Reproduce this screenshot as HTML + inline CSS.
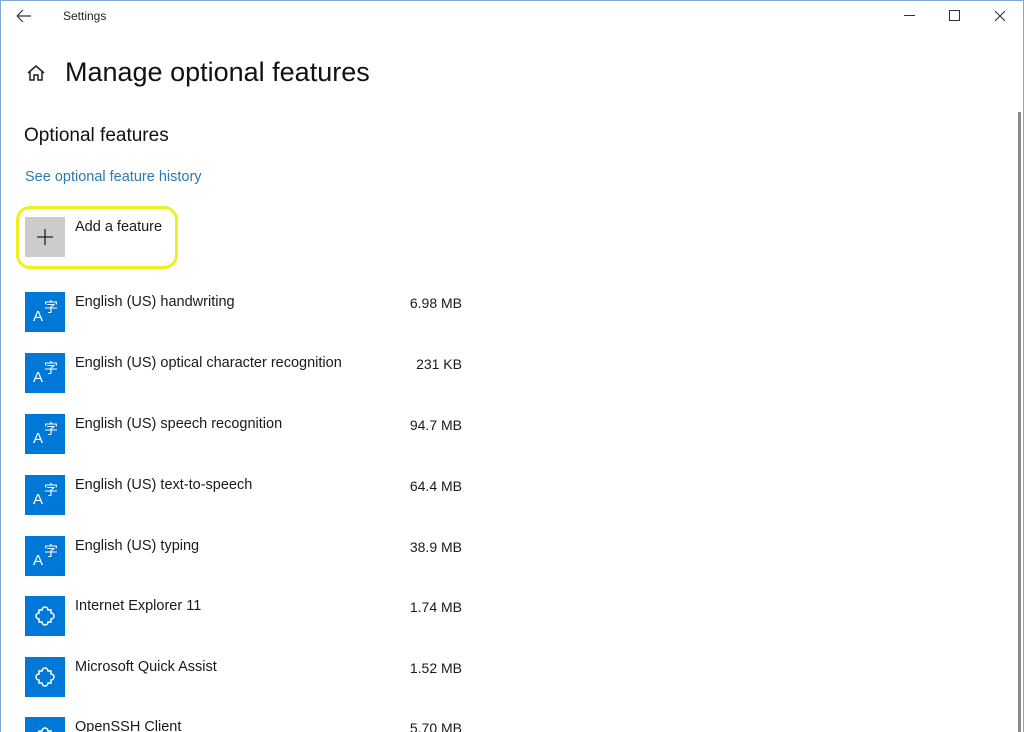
<!DOCTYPE html>
<html><head><meta charset="utf-8"><style>
html,body{margin:0;width:1024px;height:732px;overflow:hidden}
body{background:#fff;font-family:"Segoe UI","Liberation Sans","Noto Sans CJK SC",sans-serif;color:#000;position:relative}
.win{position:absolute;left:0;top:0;width:1022px;height:740px;border:1px solid #7ea9d6;border-bottom:none}
.t{position:absolute;white-space:nowrap}
.ic{position:absolute;left:25px;width:40px;height:40px;background:#0078d7;color:#fff}
.row{font-size:14.5px;color:#1a1a1a}
.sz{position:absolute;right:562px;font-size:14px;color:#1a1a1a;white-space:nowrap}
</style></head><body>
<div class="win"></div>
<svg class="t" style="left:16px;top:9px" width="16" height="14"><path d="M1 7H15M1 7L7 1M1 7L7 13" stroke="#333" stroke-width="1.2" fill="none"/></svg>
<div class="t" style="left:63px;top:9px;font-size:12px;color:#222">Settings</div>
<div class="t" style="left:904px;top:15px;width:11px;height:1px;background:#333"></div>
<div class="t" style="left:949px;top:10px;width:9px;height:9px;border:1px solid #333"></div>
<svg class="t" style="left:994px;top:10px" width="12" height="12"><path d="M1 1L11 11M11 1L1 11" stroke="#333" stroke-width="1.1"/></svg>
<div class="t" style="left:1018px;top:112px;width:3px;height:620px;background:#8a8a8a"></div>
<svg class="t" style="left:26px;top:64px" width="20" height="18"><path d="M2 9L10 2L18 9M4 7V16H8V11H12V16H16V7" stroke="#222" stroke-width="1.5" fill="none"/></svg>
<div class="t" style="left:65px;top:57px;font-size:27px;color:#111">Manage optional features</div>
<div class="t" style="left:24px;top:125px;font-size:19px;color:#111">Optional features</div>
<div class="t" style="left:25px;top:169px;font-size:14.5px;color:#2a7ab0">See optional feature history</div>
<div class="t" style="left:16px;top:206px;width:162px;height:63px;border:3px solid #f0f020;border-radius:14px;box-sizing:border-box"></div>
<div class="t" style="left:25px;top:217px;width:40px;height:40px;background:#ccc"></div>
<svg class="t" style="left:36px;top:228px" width="18" height="18"><path d="M9 1V17M1 9H17" stroke="#222" stroke-width="1.3"/></svg>
<div class="t row" style="left:75px;top:219px">Add a feature</div>

<div class="ic" style="top:292px"><span class="t" style="left:8px;top:16px;font-size:15px">A</span><span class="t" style="left:19px;top:5px;font-size:14px">字</span></div>
<div class="t row" style="left:75px;top:294px">English (US) handwriting</div><div class="sz" style="top:295px">6.98 MB</div>
<div class="ic" style="top:353px"><span class="t" style="left:8px;top:16px;font-size:15px">A</span><span class="t" style="left:19px;top:5px;font-size:14px">字</span></div>
<div class="t row" style="left:75px;top:355px">English (US) optical character recognition</div><div class="sz" style="top:356px">231 KB</div>
<div class="ic" style="top:414px"><span class="t" style="left:8px;top:16px;font-size:15px">A</span><span class="t" style="left:19px;top:5px;font-size:14px">字</span></div>
<div class="t row" style="left:75px;top:416px">English (US) speech recognition</div><div class="sz" style="top:417px">94.7 MB</div>
<div class="ic" style="top:475px"><span class="t" style="left:8px;top:16px;font-size:15px">A</span><span class="t" style="left:19px;top:5px;font-size:14px">字</span></div>
<div class="t row" style="left:75px;top:477px">English (US) text-to-speech</div><div class="sz" style="top:478px">64.4 MB</div>
<div class="ic" style="top:536px"><span class="t" style="left:8px;top:16px;font-size:15px">A</span><span class="t" style="left:19px;top:5px;font-size:14px">字</span></div>
<div class="t row" style="left:75px;top:538px">English (US) typing</div><div class="sz" style="top:539px">38.9 MB</div>

<div class="ic" style="top:596px"><svg width="40" height="40"><path d="M14 14h3a3 3 0 0 1 6 0h3v3a3 3 0 0 1 0 6v3h-3a3 3 0 0 1-6 0h-3v-3a3 3 0 0 1 0-6z" stroke="#fff" stroke-width="1.5" fill="none"/></svg></div>
<div class="t row" style="left:75px;top:598px">Internet Explorer 11</div><div class="sz" style="top:599px">1.74 MB</div>
<div class="ic" style="top:657px"><svg width="40" height="40"><path d="M14 14h3a3 3 0 0 1 6 0h3v3a3 3 0 0 1 0 6v3h-3a3 3 0 0 1-6 0h-3v-3a3 3 0 0 1 0-6z" stroke="#fff" stroke-width="1.5" fill="none"/></svg></div>
<div class="t row" style="left:75px;top:659px">Microsoft Quick Assist</div><div class="sz" style="top:660px">1.52 MB</div>
<div class="ic" style="top:717px"><svg width="40" height="40"><path d="M14 14h3a3 3 0 0 1 6 0h3v3a3 3 0 0 1 0 6v3h-3a3 3 0 0 1-6 0h-3v-3a3 3 0 0 1 0-6z" stroke="#fff" stroke-width="1.5" fill="none"/></svg></div>
<div class="t row" style="left:75px;top:719px">OpenSSH Client</div><div class="sz" style="top:720px">5.70 MB</div>
</body></html>
